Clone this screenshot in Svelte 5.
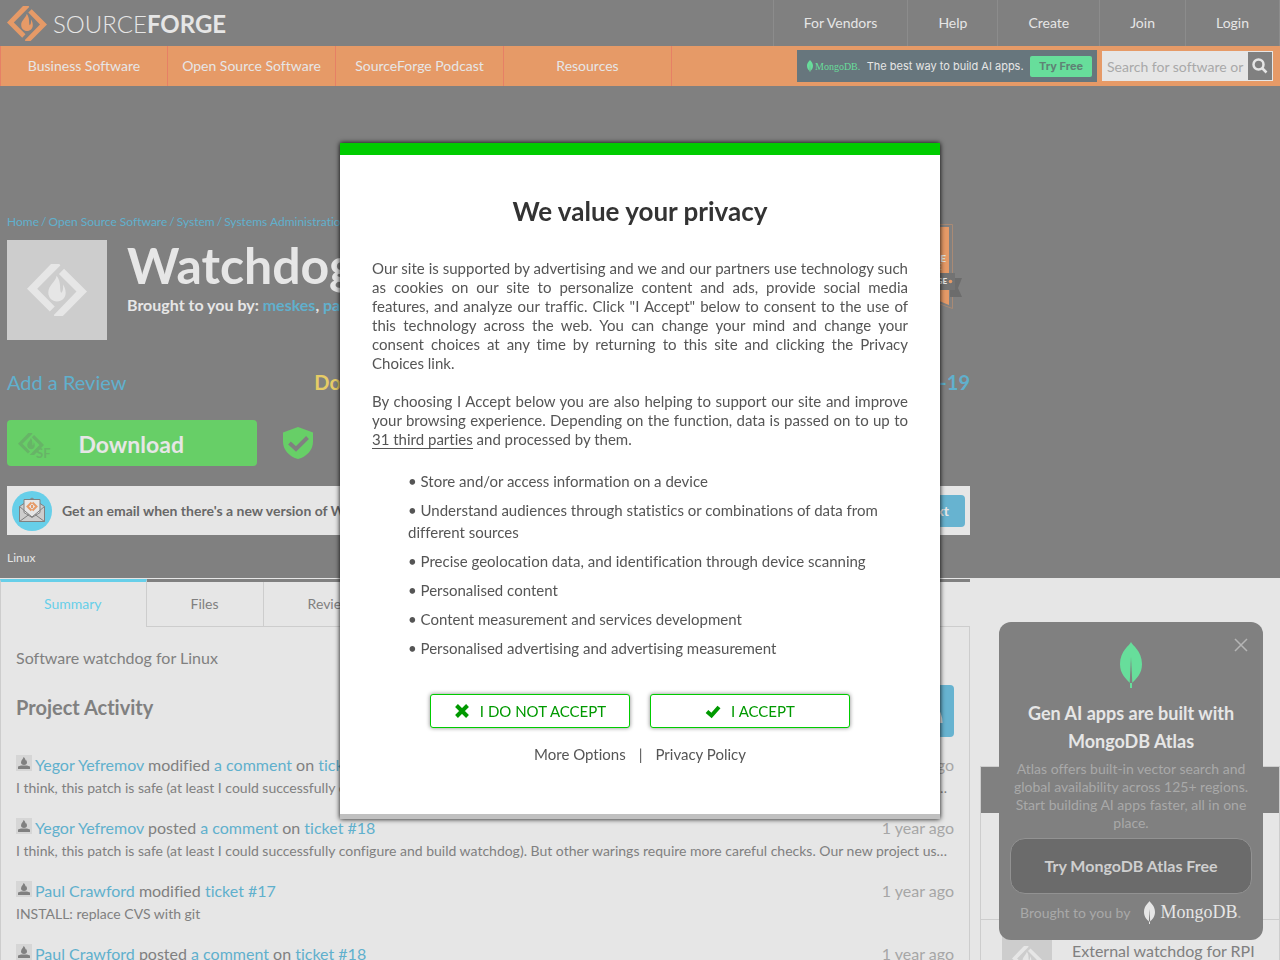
<script lang="ts">
  const accountLinks = ['For Vendors', 'Help', 'Create', 'Join', 'Login'];
  const navLinks = ['Business Software', 'Open Source Software', 'SourceForge Podcast', 'Resources'];
  const crumbs = ['Home', 'Open Source Software', 'System', 'Systems Administration'];
  const tabs = ['Summary', 'Files', 'Reviews', 'Support', 'Tickets'];

  const patchNote =
    'I think, this patch is safe (at least I could successfully configure and build watchdog). But other warings require more careful checks. Our new project use the musl library.';

  const activity = [
    { user: 'Yegor Yefremov', verb: 'modified', target: 'a comment', ticket: 'ticket #18', text: patchNote },
    { user: 'Yegor Yefremov', verb: 'posted', target: 'a comment', ticket: 'ticket #18', text: patchNote },
    { user: 'Paul Crawford', verb: 'modified', target: '', ticket: 'ticket #17', text: 'INSTALL: replace CVS with git' },
    { user: 'Paul Crawford', verb: 'posted', target: 'a comment', ticket: 'ticket #18', text: patchNote }
  ];

  const purposes = [
    'Store and/or access information on a device',
    'Understand audiences through statistics or combinations of data from different sources',
    'Precise geolocation data, and identification through device scanning',
    'Personalised content',
    'Content measurement and services development',
    'Personalised advertising and advertising measurement'
  ];

  let search = $state('');
  let showConsent = $state(true);
  let showAd = $state(true);
</script>

{#snippet diamond()}
  <svg viewBox="0 0 40 35" aria-hidden="true">
    <path d="M0 16.5 16 0h5.6l.6 1L6.8 16.5l11.7 11.8-3.3 3.4z" />
    <path d="M24.7 3.2 40 18.4 23.6 35h-5.3l-.4-1L33 18.4 21.3 6.6z" />
    <path d="M19.8 7.8c-.8 4-5.6 6.6-5.6 11.2 0 3.5 2.6 6 5.8 6 3.300 0 5.800-2.400 5.800-5.800 0-2.700-1-4.300-1.800-5.600.2 2.400 0 5-1.300 5.600-1.200-2.400.4-6.800-2.900-11.400z" />
  </svg>
{/snippet}

{#snippet leaf()}
  <svg viewBox="0 0 22 46" aria-hidden="true">
    <path d="M11 0c1 3 11 9 11 22 0 10-6 15-10 19v5h-2v-5C6 37 0 32 0 22 0 9 10 3 11 0z" />
    <path class="vein" d="M11 15l1.300 26h-2.600z" />
  </svg>
{/snippet}

<div class="page">
  <header class="top">
    <a class="brand" href="/" aria-label="SourceForge">
      {@render diamond()}
      <span>SOURCE<b>FORGE</b></span>
    </a>
    <nav class="account">
      {#each accountLinks as link}
        <a href="/{link}">{link}</a>
      {/each}
    </nav>
  </header>

  <div class="bar">
    <nav>
      {#each navLinks as link}
        <a href="/{link}">{link}</a>
      {/each}
    </nav>
    <a class="banner" href="/atlas">
      {@render leaf()}
      <span class="wordmark">MongoDB.</span>
      <span class="pitch">The best way to build AI apps.</span>
      <strong>Try Free</strong>
    </a>
    <form class="search">
      <input type="text" aria-label="Search" placeholder="Search for software or solutions" bind:value={search} />
      <button type="button" aria-label="Submit search">
        <svg viewBox="0 0 16 16" aria-hidden="true">
          <circle cx="6.500" cy="6.500" r="5" />
          <path d="M10.500 10.500 14.500 14.500" />
        </svg>
      </button>
    </form>
  </div>

  <section class="hero">
    <div class="column">
      <p class="crumbs">
        {#each crumbs as crumb, i}
          {#if i}<span>/</span>{/if}
          <a href="/{crumb}">{crumb}</a>
        {/each}
      </p>

      <div class="project">
        <div class="thumb">{@render diamond()}</div>
        <div>
          <h1>Watchdog</h1>
          <p class="by">Brought to you by: <a href="/u/meskes">meskes</a>, <a href="/u/paulcrawford">paulcrawford</a></p>
        </div>
        <svg class="award" viewBox="0 0 80 88" aria-hidden="true">
          <path class="frame" d="M5 .5h65.500v84L38 73 5 84.500z" />
          <path class="flag" d="M8 3h59v78L38 69 8 81z" />
          <path class="tail" d="M68 54h12l-4 10 4 9H68z" />
          <path class="ribbon" d="M2 49h71v17H2z" />
          <circle cx="68.500" cy="57.500" r="1.800" />
          <text x="64" y="38">SOURCE</text>
          <text class="soft" x="60" y="46">CHOICE</text>
          <text class="small" x="65" y="60">SOURCEFORGE</text>
        </svg>
      </div>

      <div class="stats">
        <a href="/reviews">Add a Review</a>
        <strong class="downloads">Downloads: 412 This Week</strong>
        <strong class="updated">Last Update: 2016-02-19</strong>
      </div>

      <div class="actions">
        <a class="download" href="/download">
          <span class="mark">{@render diamond()}<small>SF</small></span>
          Download
        </a>
        <svg class="shield" viewBox="0 0 30 32" aria-hidden="true">
          <path d="M15 0 30 5.500v9C30 23 24 29.500 15 32 6 29.500 0 23 0 14.500v-9z" />
          <path class="tick" d="M6.500 16 13 22 24.500 10.500" />
        </svg>
      </div>

      <div class="newsletter">
        <svg viewBox="0 0 40 40" aria-hidden="true">
          <circle cx="20" cy="20" r="20" fill="#67cfe9" />
          <path class="paper" d="M7.500 15.500 20 7l12.500 8.500v15h-25z" />
          <path class="letter" d="M12 8.500h16v13l-8 5-8-5z" />
          <path class="fold" d="M7.500 15.500 20 26l12.500-10.500M7.500 30.500 17 23.500M32.500 30.500 23 23.500" />
          <path class="stamp" d="M19.500 11.500 15.500 15.500 19.500 19.500M20.500 11.500 24.500 15.500 20.500 19.500M20 14v3" />
        </svg>
        <strong>Get an email when there's a new version of Watchdog</strong>
        <button type="button">Next</button>
      </div>

      <p class="platform">Linux</p>
    </div>
  </section>

  <div class="body">
    <main>
      <nav class="tabs">
        {#each tabs as tab, i}
          <a class:active={i === 0} href="/{tab}">{tab}</a>
        {/each}
      </nav>
      <div class="panel">
        <p class="summary">Software watchdog for Linux</p>
        <div class="heading">
          <h2>Project Activity</h2>
          <a class="rss" href="/feed" aria-label="Activity feed">
            <svg viewBox="0 0 32 32" aria-hidden="true">
              <circle cx="7" cy="25" r="4" />
              <path d="M4 12a16 16 0 0 1 16 16M4 4a24 24 0 0 1 24 24" />
            </svg>
          </a>
        </div>
        <ul class="activity">
          {#each activity as item}
            <li>
              <div class="event">
                <svg viewBox="0 0 16 16" aria-hidden="true">
                  <path d="M7.500 2c0 2-2.500 3-2.500 5.500C5 9 6 10 8 10s3-1 3-2.500c0-1.500-1-2-1-3-.500.500-.500 1-.500 1.500C9.500 4.500 9 3 7.500 2zM2 14v-2.500L5 10.500h6l3 1V14z" />
                </svg>
                <p>
                  <a href="/u">{item.user}</a>
                  {item.verb}
                  {#if item.target}<a href="/comment">{item.target}</a> on{/if}
                  <a href="/ticket">{item.ticket}</a>
                </p>
                <time>1 year ago</time>
              </div>
              <p class="text">{item.text}</p>
            </li>
          {/each}
        </ul>
      </div>
    </main>

    <aside>
      <div class="related">
        <div class="related-head"></div>
        <div class="related-gap"></div>
        <div class="related-item">
          <div class="mini">{@render diamond()}</div>
          <span>External watchdog for RPI</span>
        </div>
      </div>
    </aside>
  </div>
</div>

{#if showAd}
  <div class="promo">
    <button class="close" type="button" aria-label="Close" onclick={() => (showAd = false)}>
      <svg viewBox="0 0 12 12" aria-hidden="true"><path d="M0 0 12 12M12 0 0 12" /></svg>
    </button>
    <div class="leaf">{@render leaf()}</div>
    <h3>Gen AI apps are built with MongoDB Atlas</h3>
    <p>Atlas offers built-in vector search and global availability across 125+ regions. Start building AI apps faster, all in one place.</p>
    <a class="try" href="/atlas">Try MongoDB Atlas Free</a>
    <div class="sponsor">
      Brought to you by
      <span>{@render leaf()}MongoDB<i>.</i></span>
    </div>
  </div>
{/if}

{#if showConsent}
  <div class="overlay">
    <div class="dialog" role="dialog" aria-modal="true" aria-labelledby="consent-title">
      <h2 id="consent-title">We value your privacy</h2>
      <p>
        Our site is supported by advertising and we and our partners use technology such as cookies on our site to
        personalize content and ads, provide social media features, and analyze our traffic. Click "I Accept" below to
        consent to the use of this technology across the web. You can change your mind and change your consent choices
        at any time by returning to this site and clicking the Privacy Choices link.
      </p>
      <p>
        By choosing I Accept below you are also helping to support our site and improve your browsing experience.
        Depending on the function, data is passed on to up to <a href="/partners">31 third parties</a> and processed by
        them.
      </p>
      <ul>
        {#each purposes as purpose}
          <li>• {purpose}</li>
        {/each}
      </ul>
      <div class="choices">
        <button type="button" onclick={() => (showConsent = false)}>
          <svg viewBox="0 0 16 16" aria-hidden="true"><path d="M2.500 2.500 13.500 13.500M13.500 2.500 2.500 13.500" /></svg>
          I DO NOT ACCEPT
        </button>
        <button type="button" onclick={() => (showConsent = false)}>
          <svg viewBox="0 0 16 16" aria-hidden="true"><path d="M2 8.500 6.500 12.500 14 4" /></svg>
          I ACCEPT
        </button>
      </div>
      <div class="more">
        <a href="/options">More Options</a>
        <span>|</span>
        <a href="/privacy">Privacy Policy</a>
      </div>
    </div>
  </div>
{/if}

<style>
  :global(body) {
    font-family: Lato, 'Liberation Sans', sans-serif;
    font-size: 14px;
    font-variant-ligatures: no-common-ligatures;
    color: #808080;
    background: #e6e6e6;
  }

  h1,
  h2,
  h3,
  p,
  ul {
    margin: 0;
    padding: 0;
  }

  li {
    list-style: none;
  }

  a {
    color: #60b0cd;
    text-decoration: none;
  }

  svg {
    display: block;
    flex: none;
    fill: currentColor;
  }

  button,
  input {
    font: inherit;
    box-sizing: border-box;
  }

  .page {
    height: 100vh;
    overflow: hidden;
  }

  .top {
    display: flex;
    justify-content: space-between;
    height: 46px;
    background: #808080;
  }

  .brand {
    display: flex;
    align-items: center;
    gap: 6px;
    padding-left: 7px;
    color: #e69a67;
  }

  .brand svg {
    width: 40px;
  }

  .brand span {
    font-size: 24px;
    font-weight: 300;
    color: #e6e6e6;
  }

  .brand b {
    font-weight: 700;
  }

  .account {
    display: flex;
    border-right: 1px solid #8c8c8c;
  }

  .account a {
    padding: 0 30px;
    border-left: 1px solid #8c8c8c;
    line-height: 46px;
    color: #e6e6e6;
  }

  .bar {
    display: flex;
    align-items: center;
    height: 40px;
    padding-right: 7px;
    background: #e69a67;
  }

  .bar nav {
    display: flex;
    margin-right: auto;
    border-left: 1px solid #e68065;
  }

  .bar nav a {
    box-sizing: border-box;
    width: 168px;
    border-right: 1px solid #e68065;
    line-height: 40px;
    text-align: center;
    color: #e6e6e6;
  }

  .bar nav a:first-child {
    width: 167px;
  }

  .banner {
    display: flex;
    align-items: center;
    box-sizing: border-box;
    width: 300px;
    height: 32px;
    margin-right: 5px;
    padding: 0 5px 0 10px;
    background: #67767d;
    color: #67de9b;
  }

  .banner svg {
    width: 6px;
  }

  .banner .wordmark {
    margin-left: 2px;
    font-family: 'Liberation Serif', serif;
    font-size: 10px;
  }

  .banner .pitch {
    margin: 0 auto;
    font-family: Inter, sans-serif;
    font-size: 11px;
    color: #e6e6e6;
    white-space: nowrap;
  }

  .banner strong {
    width: 62px;
    border-radius: 2px;
    background: #67de9b;
    font-family: Inter, sans-serif;
    font-size: 11px;
    line-height: 21px;
    text-align: center;
    color: #5f8275;
  }

  .vein {
    fill: #808080;
  }

  .search {
    display: flex;
    box-sizing: border-box;
    width: 171px;
    height: 30px;
    padding: 1px;
    background: #e6e6e6;
  }

  .search input {
    flex: 1;
    min-width: 0;
    padding: 2px 4px;
    border: 0;
    background: transparent;
    color: #808080;
  }

  .search input::placeholder {
    color: #a9a9a9;
  }

  .search button {
    display: grid;
    place-items: center;
    width: 24px;
    padding: 0;
    border: 0;
    background: #808080;
    color: #e6e6e6;
  }

  .search svg {
    width: 16px;
    fill: none;
    stroke: currentColor;
    stroke-width: 2.5;
  }

  .hero {
    background: #808080;
    color: #e6e6e6;
  }

  .column {
    margin-right: 310px;
    padding: 128px 0 12px 7px;
  }

  .crumbs,
  .platform {
    font-size: 12px;
    line-height: 16px;
  }

  .crumbs {
    display: flex;
    gap: 2px;
    color: #60b0cd;
  }

  .project {
    position: relative;
    display: flex;
    gap: 20px;
    margin-top: 10px;
  }

  .thumb {
    display: grid;
    place-items: center;
    width: 100px;
    height: 100px;
    background: #cdcdcd;
  }

  .thumb svg {
    width: 60px;
  }

  h1 {
    font-size: 50px;
    line-height: 50px;
  }

  .by {
    margin-top: 5px;
    font-size: 16px;
    font-weight: 700;
    line-height: 20px;
  }

  .award {
    position: absolute;
    top: -16px;
    right: 8px;
    width: 80px;
    fill: #e69a67;
  }

  .award .frame {
    fill: none;
    stroke: #a98a75;
    stroke-width: 1;
  }

  .award .tail {
    fill: #6c6c6c;
  }

  .award .ribbon {
    fill: #737373;
  }

  .award text {
    font-size: 10px;
    font-weight: 900;
    text-anchor: end;
    fill: #e6e6e6;
  }

  .award .soft {
    fill: #e6c0a4;
  }

  .award .small {
    font-size: 8px;
  }

  .stats {
    display: flex;
    justify-content: space-between;
    margin-top: 30px;
    font-size: 20px;
    line-height: 24px;
  }

  .downloads {
    color: #e6cc66;
  }

  .updated {
    color: #60b0cd;
  }

  .actions {
    display: flex;
    align-items: center;
    gap: 26px;
    margin-top: 26px;
  }

  .download {
    display: flex;
    align-items: center;
    gap: 28px;
    box-sizing: border-box;
    width: 250px;
    height: 46px;
    padding: 2px 0 0 11px;
    border-radius: 4px;
    background: #67cf67;
    font-size: 23px;
    font-weight: 700;
    color: #e6e6e6;
  }

  .mark {
    display: flex;
    align-items: flex-end;
    color: #67b467;
  }

  .mark svg {
    width: 26px;
  }

  .mark small {
    margin: 0 0 -6px -8px;
    font-size: 13px;
    line-height: 16px;
  }

  .shield {
    width: 30px;
    color: #67cf67;
  }

  .shield .tick {
    fill: none;
    stroke: #808080;
    stroke-width: 4;
  }

  .newsletter {
    display: flex;
    align-items: center;
    gap: 10px;
    height: 49px;
    margin-top: 20px;
    padding: 0 5px;
    background: #e6e6e6;
    color: #686868;
  }

  .newsletter > svg {
    width: 40px;
  }

  .newsletter .paper,
  .newsletter .letter,
  .newsletter .fold,
  .newsletter .stamp {
    stroke: #808080;
    stroke-width: 1;
    fill: none;
  }

  .newsletter .paper {
    fill: #cdcdcd;
  }

  .newsletter .letter {
    fill: #e6e6e6;
  }

  .newsletter .stamp {
    stroke: #e69a67;
    stroke-width: 2;
  }

  .newsletter button {
    height: 32px;
    margin-left: auto;
    padding: 0 16px;
    border: 0;
    border-radius: 4px;
    background: #67b3d0;
    font-weight: 700;
    color: #e6e6e6;
  }

  .platform {
    margin-top: 15px;
  }

  .body {
    display: flex;
    gap: 10px;
    padding-top: 1px;
  }

  main {
    flex: 1;
    min-width: 0;
  }

  .tabs {
    display: flex;
    border-bottom: 1px solid #cdcdcd;
    background: linear-gradient(#808080 3px, transparent 3px);
  }

  .tabs a {
    margin-top: 3px;
    padding: 0 44px;
    border-right: 1px solid #cdcdcd;
    line-height: 44px;
    color: #808080;
  }

  .tabs .active {
    margin: 0 0 -1px;
    padding: 0 44px 0 43px;
    border-top: 3px solid #67cfe9;
    border-left: 1px solid #cdcdcd;
    background: #e6e6e6;
    color: #67cfe9;
  }

  .panel {
    padding: 19px 15px 0;
    border: 1px solid #cdcdcd;
    border-top: 0;
  }

  .summary {
    font-size: 16px;
    line-height: 24px;
  }

  .heading {
    display: flex;
    justify-content: space-between;
    margin-top: 15px;
  }

  .heading h2 {
    font-size: 20px;
    line-height: 44px;
  }

  .rss {
    display: grid;
    place-items: center;
    width: 52px;
    height: 52px;
    border-radius: 4px;
    background: #67b3d0;
    color: #e6e6e6;
  }

  .rss svg {
    width: 32px;
  }

  .rss path {
    fill: none;
    stroke: currentColor;
    stroke-width: 5;
  }

  .activity {
    margin-top: 17px;
  }

  .activity li {
    margin-bottom: 17px;
  }

  .event {
    display: flex;
    gap: 3px;
    font-size: 16px;
    line-height: 22px;
  }

  .event svg {
    width: 16px;
    height: 16px;
    margin-top: 1px;
    background: #d6d6d6;
  }

  .event time {
    margin-left: auto;
    color: #a6a6a6;
  }

  .text {
    overflow: hidden;
    line-height: 24px;
    text-overflow: ellipsis;
    white-space: nowrap;
  }

  aside {
    width: 300px;
  }

  .related {
    margin-top: 187px;
    border: 1px solid #cdcdcd;
  }

  .related-head {
    height: 46px;
    background: #808080;
  }

  .related-gap {
    height: 106px;
    border-bottom: 1px solid #cdcdcd;
  }

  .related-item {
    display: flex;
    gap: 20px;
    padding: 14px 21px;
    font-size: 16px;
    line-height: 34px;
  }

  .mini {
    display: grid;
    place-items: center;
    width: 50px;
    height: 50px;
    background: #cdcdcd;
    color: #e6e6e6;
  }

  .mini svg {
    width: 30px;
  }

  .promo {
    position: fixed;
    right: 17px;
    bottom: 20px;
    box-sizing: border-box;
    width: 264px;
    padding: 20px 11px 16px;
    border-radius: 12px;
    background: #808080;
    text-align: center;
    color: #a9a9a9;
  }

  .close {
    position: absolute;
    top: 17px;
    right: 16px;
    padding: 0;
    border: 0;
    background: none;
    color: #b5b5b5;
  }

  .close svg {
    width: 12px;
    stroke: currentColor;
    stroke-width: 1.5;
    overflow: visible;
  }

  .leaf svg {
    width: 22px;
    margin: 0 auto;
    color: #67de9b;
  }

  .promo h3 {
    margin-top: 11px;
    font-size: 18px;
    line-height: 28px;
    color: #e6e6e6;
  }

  .promo p {
    margin-top: 5px;
    line-height: 18px;
  }

  .try {
    display: block;
    margin-top: 6px;
    border: 1px solid #929292;
    border-radius: 15px;
    background: #6b6b6b;
    font-size: 16px;
    font-weight: 700;
    line-height: 54px;
    color: #cfcfcf;
  }

  .sponsor {
    display: flex;
    align-items: center;
    justify-content: space-between;
    height: 24px;
    padding: 6px 10px 0;
  }

  .sponsor span {
    display: flex;
    align-items: center;
    font-family: 'Liberation Serif', serif;
    font-size: 18px;
    color: #e6e6e6;
  }

  .sponsor svg {
    width: 11px;
    margin-right: 5px;
  }

  .sponsor i {
    color: #a9a9a9;
  }

  .overlay {
    position: fixed;
    inset: 0;
    display: grid;
    place-items: center;
    padding-top: 2px;
  }

  .dialog {
    box-sizing: border-box;
    width: 600px;
    padding: 36px 32px 50px;
    border-top: 12px solid #00cc00;
    border-bottom: 5px solid #c0c0c0;
    background: #fff;
    box-shadow: 0 0 5px #000;
    font-size: 15px;
    line-height: 19px;
    color: #555;
  }

  .dialog h2 {
    margin-bottom: 28px;
    font-size: 26px;
    line-height: 40px;
    text-align: center;
    color: #333;
  }

  .dialog p {
    margin-bottom: 19px;
    text-align: justify;
  }

  .dialog p a {
    border-bottom: 1px solid #555;
    color: #555;
  }

  .dialog ul {
    padding: 2px 20px 0 36px;
    line-height: 22px;
  }

  .dialog li {
    margin-bottom: 7px;
  }

  .choices {
    display: flex;
    justify-content: center;
    gap: 20px;
    margin-top: 35px;
  }

  .choices button {
    display: flex;
    align-items: center;
    justify-content: center;
    gap: 10px;
    width: 200px;
    height: 34px;
    border: 1px solid #00cc00;
    border-radius: 3px;
    background: #fff;
    box-shadow: 0 0 4px #888;
    color: #009900;
  }

  .choices svg {
    width: 16px;
    fill: none;
    stroke: currentColor;
    stroke-width: 4;
  }

  .more {
    display: flex;
    justify-content: center;
    gap: 13px;
    margin-top: 17px;
  }

  .more a {
    color: #555;
  }
</style>
